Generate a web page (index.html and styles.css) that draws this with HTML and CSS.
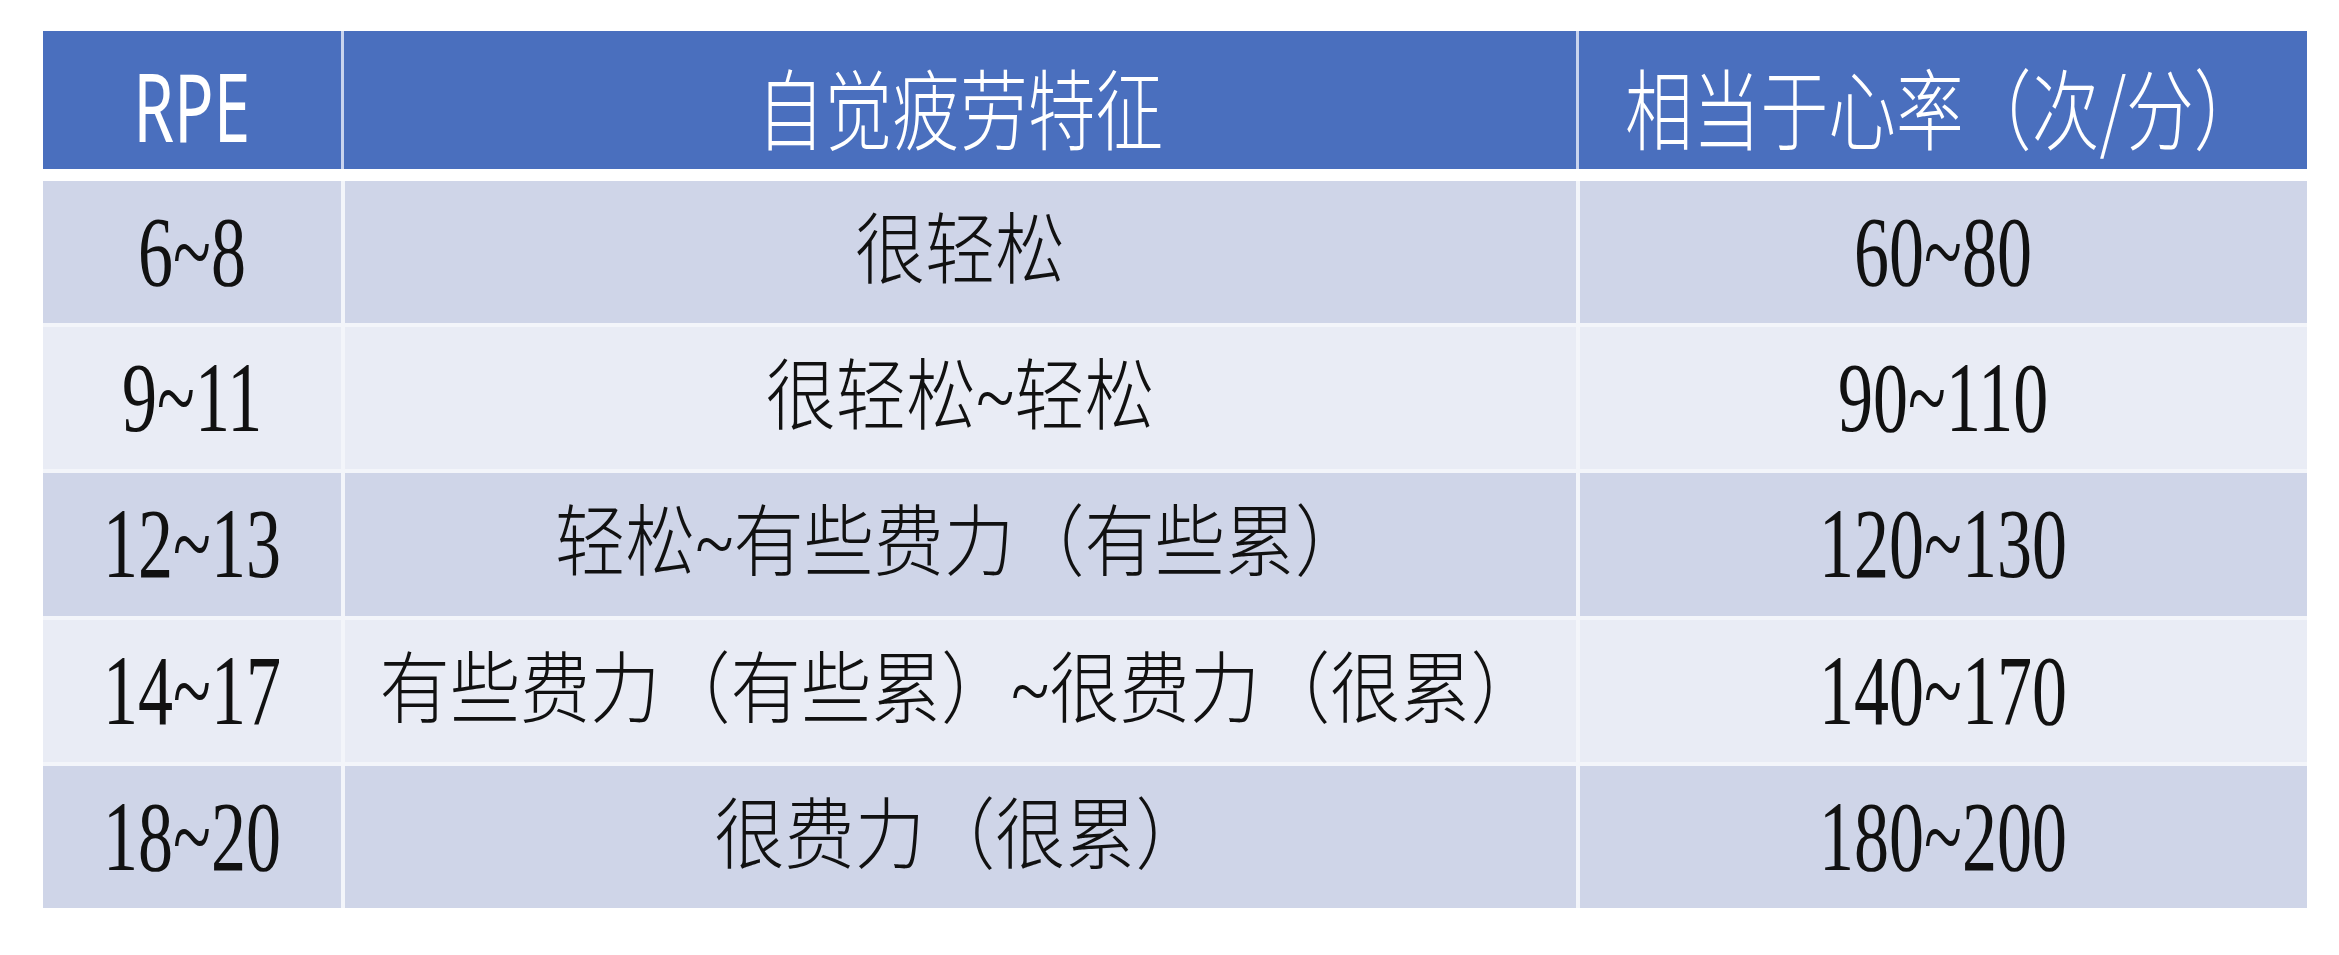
FILE: index.html
```html
<!DOCTYPE html>
<html lang="zh-CN">
<head>
<meta charset="utf-8">
<title>RPE 自觉疲劳特征</title>
<link rel="stylesheet" href="styles.css">
</head>
<body>
<div class="sheet">
  <div class="head">
    <div class="th"><span class="lat">RPE</span></div>
    <div class="th"><span class="cjk">自觉疲劳特征</span></div>
    <div class="th"><span class="cjk">相当于心率（次/分）</span></div>
  </div>
  <div class="body">
    <div class="td dark"><span class="num">6~8</span></div>
    <div class="td dark"><span class="zh">很轻松</span></div>
    <div class="td dark"><span class="num">60~80</span></div>

    <div class="td light"><span class="num">9~11</span></div>
    <div class="td light"><span class="zh">很轻松~轻松</span></div>
    <div class="td light"><span class="num">90~110</span></div>

    <div class="td dark"><span class="num">12~13</span></div>
    <div class="td dark"><span class="zh">轻松~有些费力（有些累）</span></div>
    <div class="td dark"><span class="num">120~130</span></div>

    <div class="td light"><span class="num">14~17</span></div>
    <div class="td light"><span class="zh">有些费力（有些累）~很费力（很累）</span></div>
    <div class="td light"><span class="num">140~170</span></div>

    <div class="td dark"><span class="num">18~20</span></div>
    <div class="td dark"><span class="zh">很费力（很累）</span></div>
    <div class="td dark"><span class="num">180~200</span></div>
  </div>
</div>
</body>
</html>
```
FILE: styles.css
```css
html, body {
  margin: 0;
  padding: 0;
  background: #ffffff;
}

.sheet {
  width: 2264px;
  margin: 31px 0 0 43px;
  display: flex;
  flex-direction: column;
  gap: 12px;
}

.head {
  display: grid;
  grid-template-columns: 298px 1232px 728px;
  column-gap: 3px;
  height: 138px;
  background: #c9d4ee;
}

.th {
  background: #4a6fbe;
  color: #ffffff;
  display: flex;
  align-items: center;
  justify-content: center;
  padding-top: 10px;
  box-sizing: border-box;
}

.body {
  display: grid;
  grid-template-columns: 298px 1231px 727px;
  grid-template-rows: repeat(5, 1fr);
  column-gap: 4px;
  row-gap: 4px;
  height: 727px;
  background: #f3f5fa;
}

.td {
  display: flex;
  align-items: center;
  justify-content: center;
  color: #111111;
}

.dark { background: #cfd5e8; }
.light { background: #e9ecf5; }

.th span, .td span {
  display: inline-block;
  white-space: nowrap;
  transform-origin: center;
}

.lat {
  font-family: "Noto Sans", "Open Sans", sans-serif;
  font-size: 95px;
  line-height: 1;
  transform: scaleX(0.69);
}

.cjk {
  font-family: "Noto Sans CJK SC", "Noto Sans", sans-serif;
  font-size: 88px;
  font-weight: 300;
  line-height: 1;
  transform: scaleX(0.77);
}

.num {
  font-family: "Liberation Serif", "Times New Roman", serif;
  font-size: 100px;
  line-height: 1;
  transform: scaleX(0.7);
}

.zh {
  font-family: "Liberation Serif", "Noto Sans CJK SC", serif;
  font-size: 78px;
  font-weight: 300;
  line-height: 1;
  transform: scaleX(0.9);
}
```
